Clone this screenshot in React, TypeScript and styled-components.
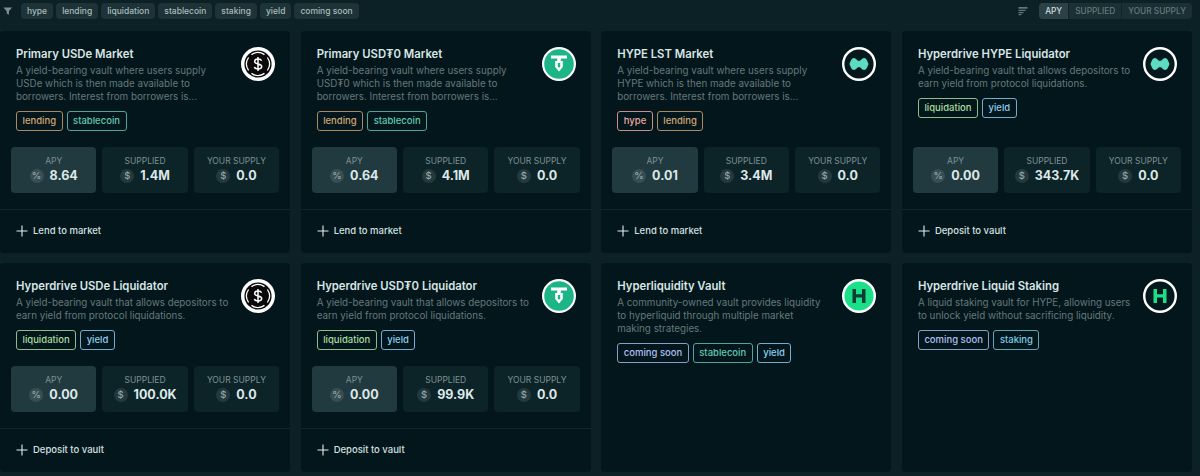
import React from 'react';
import styled, { createGlobalStyle } from 'styled-components';

type LogoKind = 'usde' | 'usdt' | 'hype' | 'hl' | 'hd';

interface Market {
  title: string;
  desc: string;
  logo: LogoKind;
  tags: string[];
  stats?: { apy: string; supplied: string; yours: string };
  action?: string;
}

const toneColors: Record<string, { text: string; border: string }> = {
  hype: { text: '#e9a9a0', border: '#c98f88' },
  lending: { text: '#d2a676', border: '#a98a62' },
  liquidation: { text: '#a9dc9f', border: '#8fbd8a' },
  stablecoin: { text: '#62c9b3', border: '#4ea696' },
  staking: { text: '#7fcbe6', border: '#5fa3b8' },
  yield: { text: '#8ccdf2', border: '#74acd0' },
  'coming soon': { text: '#aebff0', border: '#8a9cc8' },
};

const lendDesc = (coin: string) =>
  `A yield-bearing vault where users supply ${coin} which is then made available to borrowers. Interest from borrowers is...`;
const liqDesc = 'A yield-bearing vault that allows depositors to earn yield from protocol liquidations.';

const markets: Market[] = [
  { title: 'Primary USDe Market', desc: lendDesc('USDe'), logo: 'usde', tags: ['lending', 'stablecoin'], stats: { apy: '8.64', supplied: '1.4M', yours: '0.0' }, action: 'Lend to market' },
  { title: 'Primary USD₮0 Market', desc: lendDesc('USD₮0'), logo: 'usdt', tags: ['lending', 'stablecoin'], stats: { apy: '0.64', supplied: '4.1M', yours: '0.0' }, action: 'Lend to market' },
  { title: 'HYPE LST Market', desc: lendDesc('HYPE'), logo: 'hype', tags: ['hype', 'lending'], stats: { apy: '0.01', supplied: '3.4M', yours: '0.0' }, action: 'Lend to market' },
  { title: 'Hyperdrive HYPE Liquidator', desc: liqDesc, logo: 'hype', tags: ['liquidation', 'yield'], stats: { apy: '0.00', supplied: '343.7K', yours: '0.0' }, action: 'Deposit to vault' },
  { title: 'Hyperdrive USDe Liquidator', desc: liqDesc, logo: 'usde', tags: ['liquidation', 'yield'], stats: { apy: '0.00', supplied: '100.0K', yours: '0.0' }, action: 'Deposit to vault' },
  { title: 'Hyperdrive USD₮0 Liquidator', desc: liqDesc, logo: 'usdt', tags: ['liquidation', 'yield'], stats: { apy: '0.00', supplied: '99.9K', yours: '0.0' }, action: 'Deposit to vault' },
  { title: 'Hyperliquidity Vault', desc: 'A community-owned vault provides liquidity to hyperliquid through multiple market\nmaking strategies.', logo: 'hl', tags: ['coming soon', 'stablecoin', 'yield'] },
  { title: 'Hyperdrive Liquid Staking', desc: 'A liquid staking vault for HYPE, allowing users to unlock yield without sacrificing liquidity.', logo: 'hd', tags: ['coming soon', 'staking'] },
];

const filters = ['hype', 'lending', 'liquidation', 'stablecoin', 'staking', 'yield', 'coming soon'];

const Logo: React.FC<{ kind: LogoKind }> = ({ kind }) => {
  if (kind === 'usde') {
    return (
      <svg width="36" height="36" viewBox="0 0 36 36">
        <circle cx="18" cy="18" r="17" fill="#fff" />
        <circle cx="18" cy="18" r="13.6" fill="#0a0a0a" />
        <path d="M11.5 8.6A11.4 11.4 0 0 1 24.5 8.6M24.5 27.4A11.4 11.4 0 0 1 11.5 27.4M8.6 11.5A11.4 11.4 0 0 0 8.6 24.5M27.4 24.5A11.4 11.4 0 0 0 27.4 11.5" fill="none" stroke="#fff" strokeWidth="1.3" />
        <path d="M21.6 14.8C21.1 13.5 19.7 13 18 13C16 13 14.6 13.9 14.6 15.4C14.6 18.9 21.7 17 21.7 20.6C21.7 22.1 20 23 18 23C16.1 23 14.8 22.3 14.4 21M18 11V25" fill="none" stroke="#fff" strokeWidth="1.5" />
      </svg>
    );
  }
  if (kind === 'usdt') {
    return (
      <svg width="36" height="36" viewBox="0 0 36 36">
        <circle cx="18" cy="18" r="17" fill="#fff" />
        <circle cx="18" cy="18" r="14.8" fill="#1db588" />
        <path d="M10 9.5H26V12.5H19.8V15H21.8V21L18 25.5L14.2 21V15H16.2V12.5H10Z" fill="#fff" />
        <path d="M16.8 17H19.2V20.3L18 22L16.8 20.3Z" fill="#1db588" />
      </svg>
    );
  }
  if (kind === 'hype') {
    return (
      <svg width="36" height="36" viewBox="0 0 36 36">
        <circle cx="18" cy="18" r="15.8" fill="#04191d" stroke="#fff" strokeWidth="2.4" />
        <path d="M8.5 18C9.5 15.5 10.5 12 13 12C15.2 12 16 15 18 15C20 15 20.8 12 23 12C25.5 12 26.5 15.5 27.5 18C26.5 20.5 25.5 24 23 24C20.8 24 20 21 18 21C16 21 15.2 24 13 24C10.5 24 9.5 20.5 8.5 18Z" fill="#5cdcc0" />
      </svg>
    );
  }
  const hl = kind === 'hl';
  return (
    <svg width="36" height="36" viewBox="0 0 36 36">
      <circle cx="18" cy="18" r="15.8" fill={hl ? '#1be08a' : '#04191d'} stroke="#fff" strokeWidth="2.4" />
      <path d="M11.5 11H15V16.3H21V11H24.5V25H21V19.5H15V25H11.5Z" fill={hl ? '#0f3d33' : '#1be08a'} />
    </svg>
  );
};

const StatBox: React.FC<{ label: string; sign: string; value: string; active?: boolean }> = ({ label, sign, value, active }) => (
  <Stat $active={active}>
    <StatLabel>{label}</StatLabel>
    <StatValue>
      <StatSign>{sign}</StatSign>
      {value}
    </StatValue>
  </Stat>
);

const App: React.FC = () => (
  <Page>
    <GlobalStyle />
    <TopBar>
      <FilterGroup>
        <svg width="10" height="10" viewBox="0 0 10 10">
          <path d="M0.5 1.5H9L5.9 5.2V8.8L3.7 7.6V5.2Z" fill="#7d9092" />
        </svg>
        <Chips>
          {filters.map((f) => (
            <Chip key={f}>{f}</Chip>
          ))}
        </Chips>
      </FilterGroup>
      <SortGroup>
        <svg width="10" height="10" viewBox="0 0 10 10" fill="#62797b">
          <rect x="0.5" y="1" width="9" height="1.7" />
          <rect x="0.5" y="3.8" width="7" height="1.2" />
          <rect x="0.5" y="6" width="5" height="1.2" />
          <rect x="0.5" y="8" width="3" height="1.2" />
        </svg>
        <Segments>
          <Segment $active>APY</Segment>
          <Segment>SUPPLIED</Segment>
          <Segment>YOUR SUPPLY</Segment>
        </Segments>
      </SortGroup>
    </TopBar>
    <Grid>
      {markets.map((m) => (
        <Card key={m.title}>
          <CardHead>
            <CardText>
              <Title>{m.title}</Title>
              <Desc>{m.desc}</Desc>
              <Tags>
                {m.tags.map((t) => (
                  <Tag key={t} $tone={t}>{t}</Tag>
                ))}
              </Tags>
            </CardText>
            <LogoWrap>
              <Logo kind={m.logo} />
            </LogoWrap>
          </CardHead>
          {m.stats && (
            <>
              <Stats>
                <StatBox label="APY" sign="%" value={m.stats.apy} active />
                <StatBox label="SUPPLIED" sign="$" value={m.stats.supplied} />
                <StatBox label="YOUR SUPPLY" sign="$" value={m.stats.yours} />
              </Stats>
              <Footer>
                <svg width="12" height="12" viewBox="0 0 12 12">
                  <path d="M6 0.5V11.5M0.5 6H11.5" stroke="#e4eeee" strokeWidth="1.1" />
                </svg>
                {m.action}
              </Footer>
            </>
          )}
        </Card>
      ))}
    </Grid>
  </Page>
);

export default App;

// Styled Components
const GlobalStyle = createGlobalStyle`
  html, body {
    margin: 0;
    background: #0c2126;
  }
  body {
    font-family: Inter, "Noto Sans", "Liberation Sans", sans-serif;
  }
`;

const Page = styled.div`
  width: 1192px;
  height: 476px;
  box-sizing: border-box;
  overflow: hidden;
`;

const TopBar = styled.div`
  height: 31px;
  box-sizing: border-box;
  padding: 3px 0 0 3px;
  display: flex;
  justify-content: space-between;
  align-items: flex-start;
`;

const FilterGroup = styled.div`
  display: flex;
  align-items: center;
  gap: 8px;
  height: 16px;
`;

const Chips = styled.div`
  display: flex;
  gap: 3px;
`;

const Chip = styled.span`
  height: 16px;
  line-height: 16px;
  padding: 0 6px;
  border-radius: 4px;
  background: #1d3338;
  color: #a8bcbc;
  font-size: 8.5px;
  font-weight: 500;
`;

const SortGroup = styled.div`
  display: flex;
  align-items: center;
  gap: 11px;
  height: 16px;
`;

const Segments = styled.div`
  display: flex;
  height: 16px;
  border-radius: 4px;
  overflow: hidden;
  background: #1a3035;
`;

const Segment = styled.span<{ $active?: boolean }>`
  padding: 0 6px;
  line-height: 16px;
  font-size: 8.3px;
  font-weight: 500;
  color: ${(p) => (p.$active ? '#d0dcdc' : '#62797b')};
  background: ${(p) => (p.$active ? '#2b4146' : 'transparent')};
  border-right: 1px solid #0f252a;
  &:last-child {
    border-right: none;
  }
`;

const Grid = styled.div`
  display: grid;
  grid-template-columns: repeat(4, 1fr);
  column-gap: 10.5px;
  row-gap: 10px;
`;

const Card = styled.div`
  background: #03161b;
  border-radius: 4px;
  display: flex;
  flex-direction: column;
  min-width: 0;
`;

const CardHead = styled.div`
  display: flex;
  justify-content: space-between;
  align-items: flex-start;
  padding: 16px 14px 0 16px;
`;

const CardText = styled.div`
  width: 214px;
`;

const LogoWrap = styled.div`
  flex: none;
  height: 36px;
  margin-top: -1px;
`;

const Title = styled.div`
  font-size: 11.3px;
  line-height: 14px;
  font-weight: 600;
  color: #d9e6e6;
`;

const Desc = styled.p`
  margin: 3px 0 0;
  font-size: 9.8px;
  line-height: 13px;
  color: #66797c;
  white-space: pre-line;
`;

const Tags = styled.div`
  display: flex;
  gap: 4px;
  margin-top: 8px;
`;

const Tag = styled.span<{ $tone: string }>`
  height: 20px;
  box-sizing: border-box;
  line-height: 18px;
  padding: 0 5.5px;
  border-radius: 3px;
  font-size: 9.5px;
  font-weight: 500;
  background: #03161b;
  color: ${(p) => toneColors[p.$tone].text};
  border: 1px solid ${(p) => toneColors[p.$tone].border};
`;

const Stats = styled.div`
  margin-top: auto;
  padding: 16px 11px 0;
  display: grid;
  grid-template-columns: repeat(3, 1fr);
  gap: 6px;
`;

const Stat = styled.div<{ $active?: boolean }>`
  height: 46px;
  border-radius: 4px;
  background: ${(p) => (p.$active ? '#213a3f' : '#0c2328')};
  display: flex;
  flex-direction: column;
  align-items: center;
  justify-content: center;
  gap: 1px;
`;

const StatLabel = styled.div`
  font-size: 8.5px;
  line-height: 11px;
  color: #7d9194;
`;

const StatValue = styled.div`
  display: flex;
  align-items: center;
  gap: 6px;
  font-size: 12.5px;
  line-height: 16px;
  font-weight: 700;
  color: #dde8e8;
`;

const StatSign = styled.span`
  width: 14px;
  height: 14px;
  border-radius: 50%;
  background: rgba(255, 255, 255, 0.1);
  color: #93a6a8;
  font-size: 9.5px;
  font-weight: 500;
  display: flex;
  align-items: center;
  justify-content: center;
`;

const Footer = styled.div`
  margin-top: 16px;
  height: 44px;
  box-sizing: border-box;
  border-top: 1px solid #0f262b;
  padding: 0 16px 2px;
  display: flex;
  align-items: center;
  gap: 5px;
  font-size: 9.5px;
  font-weight: 500;
  color: #d4e0e0;
`;
